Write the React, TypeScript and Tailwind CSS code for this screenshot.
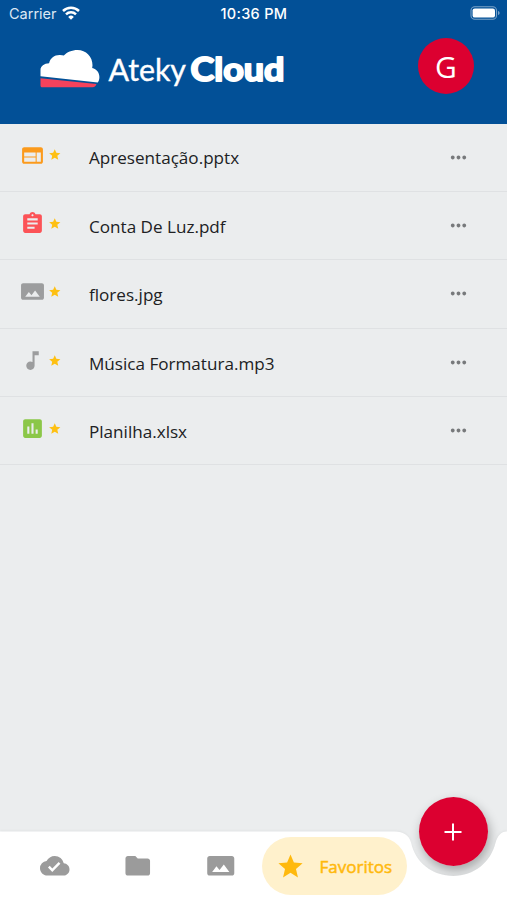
import React from "react";
import type { IconType } from "react-icons";
import {
  MdAssessment,
  MdAssignment,
  MdCloudDone,
  MdFolder,
  MdMoreHoriz,
  MdMusicNote,
  MdPanorama,
  MdStar,
  MdWeb,
} from "react-icons/md";

type FileItem = { name: string; icon: IconType; color: string };

const FILES: FileItem[] = [
  { name: "Apresentação.pptx", icon: MdWeb, color: "text-[#fb9a1c]" },
  { name: "Conta De Luz.pdf", icon: MdAssignment, color: "text-[#fc5357]" },
  { name: "flores.jpg", icon: MdPanorama, color: "text-[#9c9d9e]" },
  { name: "Música Formatura.mp3", icon: MdMusicNote, color: "text-[#9c9d9e]" },
  { name: "Planilha.xlsx", icon: MdAssessment, color: "text-[#8bc748]" },
];

function StatusBar() {
  return (
    <div className="relative flex h-[27px] items-center justify-between pl-[9px] pr-[7px] font-['Inter',sans-serif] text-white">
      <div className="flex items-center gap-[5px]">
        <span className="text-[14.5px] text-[#dce8f4]">Carrier</span>
        <svg className="-mt-0.5" width="18" height="14" viewBox="0 0 18 14" fill="none" stroke="white" strokeWidth="2.5">
          <path d="M1 5a11.5 11.5 0 0 1 16 0" />
          <path d="M4 8.300a7.200 7.200 0 0 1 10 0" />
          <path d="M6.200 10.900a4 4 0 0 1 5.600 0L9 13.800z" fill="white" stroke="none" />
        </svg>
      </div>
      <span className="absolute left-[220.500px] text-[14.5px] font-medium tracking-[0.3px]">10:36 PM</span>
      <svg className="-mt-0.5" width="30" height="14" viewBox="0 0 30 14">
        <rect x="1" y="0.8" width="25.5" height="12.4" rx="3.8" fill="none" stroke="#7ba2c8" strokeWidth="1.1" />
        <rect x="2.600" y="2.400" width="22.400" height="9.200" rx="2.200" fill="white" />
        <path d="M28 5v4c1-.3 1.600-1.100 1.600-2S29 5.300 28 5z" fill="#7ba2c8" />
      </svg>
    </div>
  );
}

function Logo() {
  return (
    <svg width="250" height="46" viewBox="38 46 250 46" role="img" aria-label="Ateky Cloud">
      <path
        d="M40.500 76.300V70c0-3.700 3.700-6.700 8.600-6.700C50.200 58 54.600 54.800 60 55c1.500 0 2.700.2 3.800.6C66.700 52.200 72 50 77.500 50c8.500 0 15.200 6.700 15 15.300-.1 1-.1 1.600-.3 2.600 4.500 1 7.200 4.700 7.200 9 0 2.500-.6 4.200-1.700 5.700z"
        fill="white"
      />
      <path d="M40.500 78.300l56 5.600c-.5 1.900-1.800 3.300-4 3.300H42.300c-1.200 0-1.800-.6-1.800-1.800z" fill="#f4425c" />
      <text
        x="108.500"
        y="81.200"
        fontSize="31.500"
        fill="white"
        stroke="white"
        strokeWidth="0.400"
        textLength="77.500"
        lengthAdjust="spacingAndGlyphs"
        className="font-['Lato',sans-serif]"
      >
        Ateky
      </text>
      <text
        x="190.500"
        y="81"
        fontSize="32"
        fill="white"
        stroke="white"
        strokeWidth="1.900"
        strokeLinejoin="round"
        textLength="94"
        lengthAdjust="spacingAndGlyphs"
        className="font-['Lato',sans-serif] font-bold"
      >
        Cloud
      </text>
    </svg>
  );
}

function Header() {
  return (
    <header className="h-[123.500px] shrink-0 bg-[#025097]">
      <StatusBar />
      <div className="flex items-start justify-between pl-[38px] pr-[33px] pt-[11px]">
        <div className="pt-2">
          <Logo />
        </div>
        <div className="flex size-[56px] items-center justify-center rounded-full bg-[#dc0030] text-[30px] text-white">
          G
        </div>
      </div>
    </header>
  );
}

function FileRow({ file }: { file: FileItem }) {
  const Icon = file.icon;

  return (
    <li className="flex h-[68.4px] items-center border-b border-[#dfe1e3] pl-[20px] pr-[37.500px]">
      <Icon className={`mb-[4px] size-[25px] ${file.color}`} />
      <MdStar className="mb-[4px] ml-[3px] size-[13.500px] text-[#fec012]" />
      <span className="ml-[27.500px] flex-1 pt-[2px] text-[17.100px] text-[#202123]">{file.name}</span>
      <MdMoreHoriz className="size-[23px] text-[#77797b]" />
    </li>
  );
}

function BottomBar() {
  return (
    <nav className="relative h-[69px] w-full">
      {/* button shadow sits behind the bar so it only shows in the notch */}
      <div className="absolute left-[418.5px] top-[-34px] size-[69px] rounded-full shadow-[2px_5px_11px_rgba(0,0,0,0.3)]" />
      {/* bar with a notch cut out under the floating button */}
      <svg className="absolute bottom-0 left-0 drop-shadow-[0_-1px_1px_rgba(0,0,0,0.04)]" width="507" height="69" viewBox="0 831 507 69">
        <path
          d="M0 831.500H394C404 831.500 409 835.500 411 842.500C415 862 432 876 453.500 876C474 876 491 862 495.500 843C497.500 836 501 831.500 507 831.500V900H0z"
          fill="white"
        />
      </svg>
      <div className="relative flex h-full items-center pl-[40px] pt-px">
        <MdCloudDone className="size-[29.500px] text-[#9b9b9b]" />
        <MdFolder className="ml-[53.500px] size-[29.500px] text-[#9b9b9b]" />
        <MdPanorama className="ml-[53.500px] size-[29.500px] text-[#9b9b9b]" />
        <div className="ml-[26px] flex h-[58px] w-[145px] items-center rounded-full bg-[#fff1cc] pl-[14px] text-[#ffb90d]">
          <MdStar className="size-[29px]" />
          <span className="ml-[15px] pt-px text-[17px] [-webkit-text-stroke:0.5px_#ffb90d]">Favoritos</span>
        </div>
      </div>
      <button className="absolute left-[418.5px] top-[-34px] flex size-[69px] items-center justify-center rounded-full bg-[#dc0030]">
        <svg width="18" height="18" viewBox="0 0 18 18" stroke="white" strokeWidth="2">
          <path d="M9 0.500v17M0.500 9h17" />
        </svg>
      </button>
    </nav>
  );
}

export default function App() {
  return (
    <div className="flex h-[900px] w-[507px] flex-col overflow-hidden bg-[#ebedee] font-['Open_Sans',sans-serif]">
      <Header />
      <ul className="flex-1">
        {FILES.map((file) => (
          <FileRow key={file.name} file={file} />
        ))}
      </ul>
      <BottomBar />
    </div>
  );
}
